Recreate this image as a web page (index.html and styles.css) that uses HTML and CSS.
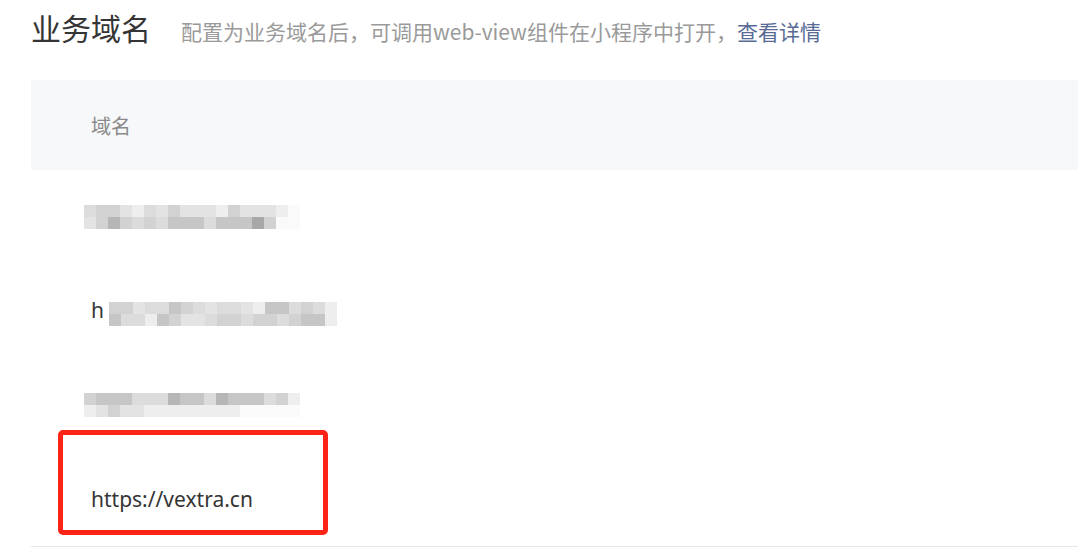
FILE: index.html
```html
<!DOCTYPE html>
<html>

	<head>
		<meta charset="UTF-8">
		<title>业务域名</title>
		<link rel="stylesheet" href="styles.css">
	</head>

	<body>
		<div class="page">
			<div class="head">
				<h2>业务域名</h2>
				<p class="tip">配置为业务域名后，可调用web-view组件在小程序中打开，<a href="##">查看详情</a></p>
			</div>
			<table cellspacing="0">
				<thead>
					<tr>
						<th>域名</th>
					</tr>
				</thead>
				<tbody>
					<tr>
						<td>
							<!--打了码的域名-->
							<div class="mosaic m-row1">
								<i class="a"></i><i class="b"></i><i class="b"></i><i class="d"></i><i class="f"></i><i class="a"></i><i class="d"></i><i class="b"></i><i class="d"></i><i class="d"></i><i class="d"></i><i class="f"></i><i class="b"></i><i class="d"></i><i class="d"></i><i class="d"></i><i class="f"></i><i class="w"></i>
								<i class="d"></i><i class="b"></i><i class="e"></i><i class="b"></i><i class="a"></i><i class="b"></i><i class="a"></i><i class="c"></i><i class="c"></i><i class="c"></i><i class="a"></i><i class="c"></i><i class="c"></i><i class="c"></i><i class="g"></i><i class="b"></i><i class="w"></i><i class="w"></i>
							</div>
						</td>
					</tr>
					<tr>
						<td>
							<span class="url">h</span><div class="mosaic m-row2">
								<i class="b"></i><i class="b"></i><i class="d"></i><i class="a"></i><i class="a"></i><i class="c"></i><i class="b"></i><i class="a"></i><i class="d"></i><i class="a"></i><i class="a"></i><i class="d"></i><i class="f"></i><i class="c"></i><i class="c"></i><i class="a"></i><i class="b"></i><i class="a"></i><i class="f"></i>
								<i class="c"></i><i class="a"></i><i class="a"></i><i class="f"></i><i class="c"></i><i class="b"></i><i class="d"></i><i class="d"></i><i class="a"></i><i class="b"></i><i class="b"></i><i class="a"></i><i class="b"></i><i class="b"></i><i class="a"></i><i class="b"></i><i class="c"></i><i class="c"></i><i class="f"></i>
							</div>
						</td>
					</tr>
					<tr>
						<td>
							<div class="mosaic m-row1">
								<i class="b"></i><i class="c"></i><i class="c"></i><i class="c"></i><i class="a"></i><i class="a"></i><i class="a"></i><i class="e"></i><i class="c"></i><i class="c"></i><i class="a"></i><i class="e"></i><i class="c"></i><i class="c"></i><i class="c"></i><i class="a"></i><i class="b"></i><i class="f"></i>
								<i class="f"></i><i class="d"></i><i class="b"></i><i class="d"></i><i class="d"></i><i class="f"></i><i class="f"></i><i class="f"></i><i class="f"></i><i class="f"></i><i class="f"></i><i class="f"></i><i class="f"></i><i class="w"></i><i class="w"></i><i class="w"></i><i class="w"></i><i class="w"></i>
							</div>
						</td>
					</tr>
					<tr>
						<td><span class="url">https://vextra.cn</span></td>
					</tr>
				</tbody>
			</table>
			<!--红框标注-->
			<div class="mark"></div>
		</div>
	</body>

</html>
```

FILE: styles.css
```css
* {
	margin: 0;
	padding: 0;
}

body {
	font-family: "Noto Sans", "Noto Sans CJK SC", sans-serif;
	background: #fff;
	overflow: hidden;
}

.page {
	position: relative;
	padding-left: 31px;
}

.head {
	display: flex;
	align-items: baseline;
	height: 80px;
	padding-top: 7px;
	box-sizing: border-box;
}

.head h2 {
	font-family: "Noto Sans CJK SC", sans-serif;
	font-size: 30px;
	font-weight: 400;
	color: #353535;
	line-height: 40px;
	margin-right: 30px;
}

.tip {
	font-family: "Noto Sans CJK SC", sans-serif;
	font-size: 21px;
	color: #9a9a9a;
}

.tip a {
	color: #576b95;
	text-decoration: none;
}

table {
	width: 1100px;
	border-collapse: collapse;
}

table th {
	height: 90px;
	padding: 0 0 0 60px;
	background: #f7f8fa;
	text-align: left;
	font-family: "Noto Sans CJK SC", sans-serif;
	font-size: 20px;
	font-weight: 400;
	color: #8a8a8a;
}

table td {
	height: 94px;
	padding: 0 0 0 53px;
	vertical-align: middle;
}

table tr:last-child td {
	border-bottom: 1px solid #e7e7e7;
}

.url {
	font-size: 21px;
	color: #353535;
	padding-left: 7px;
}

.mosaic {
	display: inline-grid;
	grid-auto-rows: 12px;
	vertical-align: middle;
}

.m-row1 {
	grid-template-columns: repeat(18, 12px);
}

.m-row2 {
	grid-template-columns: repeat(19, 12px);
	margin-left: 5px;
}

.mosaic i {
	display: block;
}

.mosaic .a { background: #dcdcdc; }
.mosaic .b { background: #d2d2d2; }
.mosaic .c { background: #c6c6c6; }
.mosaic .d { background: #e3e3e3; }
.mosaic .e { background: #b6b6b6; }
.mosaic .f { background: #eeeeee; }
.mosaic .g { background: #a8a8a8; }
.mosaic .w { background: #fafafa; }

.mark {
	position: absolute;
	left: 58px;
	top: 430px;
	width: 260px;
	height: 95px;
	border: 5px solid #fb2417;
	border-radius: 5px;
}
```
